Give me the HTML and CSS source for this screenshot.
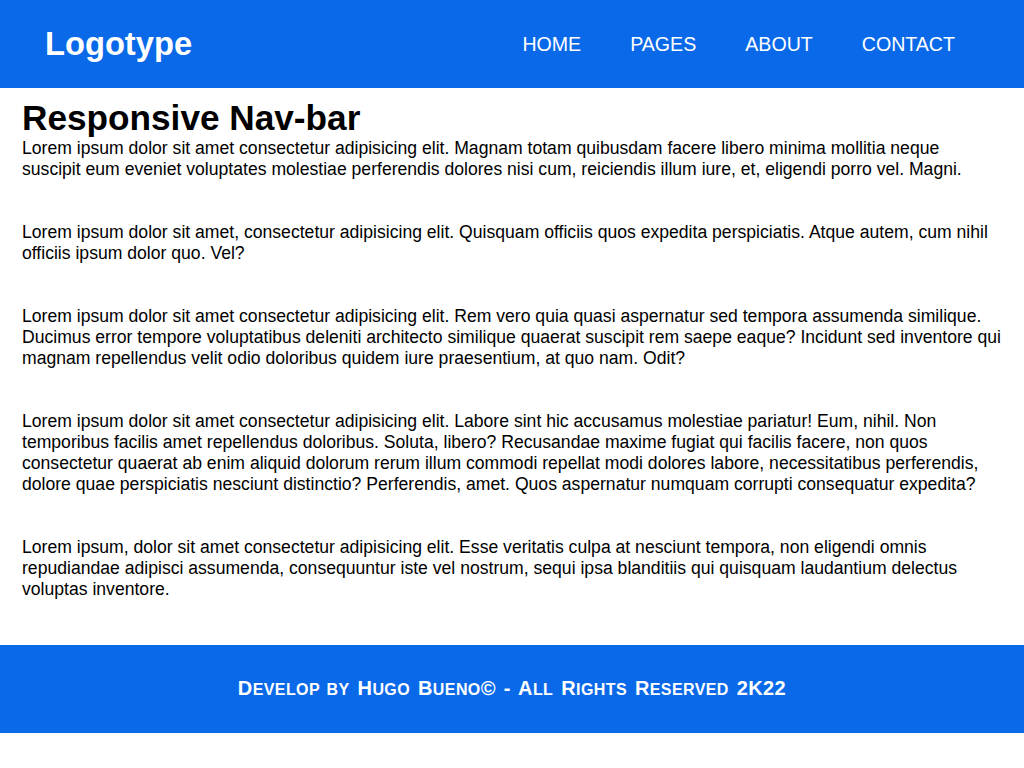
FILE: index.html
```html
<!DOCTYPE html>
<html lang="en">
<head>
<meta charset="utf-8">
<title>Responsive Nav-bar</title>
<link rel="stylesheet" href="styles.css">
</head>
<body>
<header class="header">
  <a class="logo" href="#">Logotype</a>
  <nav class="nav">
    <a class="nav-link" href="#">HOME</a>
    <a class="nav-link" href="#">PAGES</a>
    <a class="nav-link" href="#">ABOUT</a>
    <a class="nav-link" href="#">CONTACT</a>
  </nav>
</header>
<main class="content">
  <h1 class="title">Responsive Nav-bar</h1>
  <p class="para">Lorem ipsum dolor sit amet consectetur adipisicing elit. Magnam totam quibusdam facere libero minima mollitia neque suscipit eum eveniet voluptates molestiae perferendis dolores nisi cum, reiciendis illum iure, et, eligendi porro vel. Magni.</p>
  <p class="para">Lorem ipsum dolor sit amet, consectetur adipisicing elit. Quisquam officiis quos expedita perspiciatis. Atque autem, cum nihil officiis ipsum dolor quo. Vel?</p>
  <p class="para">Lorem ipsum dolor sit amet consectetur adipisicing elit. Rem vero quia quasi aspernatur sed tempora assumenda similique. Ducimus error tempore voluptatibus deleniti architecto similique quaerat suscipit rem saepe eaque? Incidunt sed inventore qui magnam repellendus velit odio doloribus quidem iure praesentium, at quo nam. Odit?</p>
  <p class="para">Lorem ipsum dolor sit amet consectetur adipisicing elit. Labore sint hic accusamus molestiae pariatur! Eum, nihil. Non temporibus facilis amet repellendus doloribus. Soluta, libero? Recusandae maxime fugiat qui facilis facere, non quos consectetur quaerat ab enim aliquid dolorum rerum illum commodi repellat modi dolores labore, necessitatibus perferendis, dolore quae perspiciatis nesciunt distinctio? Perferendis, amet. Quos aspernatur numquam corrupti consequatur expedita?</p>
  <p class="para">Lorem ipsum, dolor sit amet consectetur adipisicing elit. Esse veritatis culpa at nesciunt tempora, non eligendi omnis repudiandae adipisci assumenda, consequuntur iste vel nostrum, sequi ipsa blanditiis qui quisquam laudantium delectus voluptas inventore.</p>
</main>
<footer class="footer">
  <p class="footer-text">D<span class="sc">evelop by</span> H<span class="sc">ugo</span> B<span class="sc">ueno</span>© - A<span class="sc">ll</span> R<span class="sc">ights</span> R<span class="sc">eserved</span> 2K22</p>
</footer>
</body>
</html>
```
FILE: styles.css
```css
* {
  box-sizing: border-box;
}

body {
  margin: 0;
  font-family: "Liberation Sans", Arial, sans-serif;
  color: #000;
  background: #fff;
}

.header {
  height: 88px;
  background: #0a69e9;
  display: flex;
  align-items: center;
  justify-content: space-between;
  padding: 0 44.5px 0 45px;
}

.logo {
  color: #fff;
  text-decoration: none;
  font-weight: bold;
  font-size: 32.7px;
}

.nav {
  display: flex;
}

.nav-link {
  color: #fff;
  text-decoration: none;
  font-size: 19.6px;
  padding: 0 24.5px;
}

.content {
  padding: 9.5px 22px 3px;
}

.title {
  margin: 0;
  font-size: 35.2px;
}

.para {
  margin: 0 0 42px;
  font-size: 17.6px;
  line-height: 21px;
}

.footer {
  height: 88px;
  background: #0a69e9;
  display: flex;
  align-items: center;
  justify-content: center;
}

.footer-text {
  margin: 0;
  color: #fff;
  font-weight: bold;
  font-size: 20px;
  letter-spacing: 0.4px;
  word-spacing: 2px;
}

.sc {
  font-size: 16px;
  text-transform: uppercase;
}
```
